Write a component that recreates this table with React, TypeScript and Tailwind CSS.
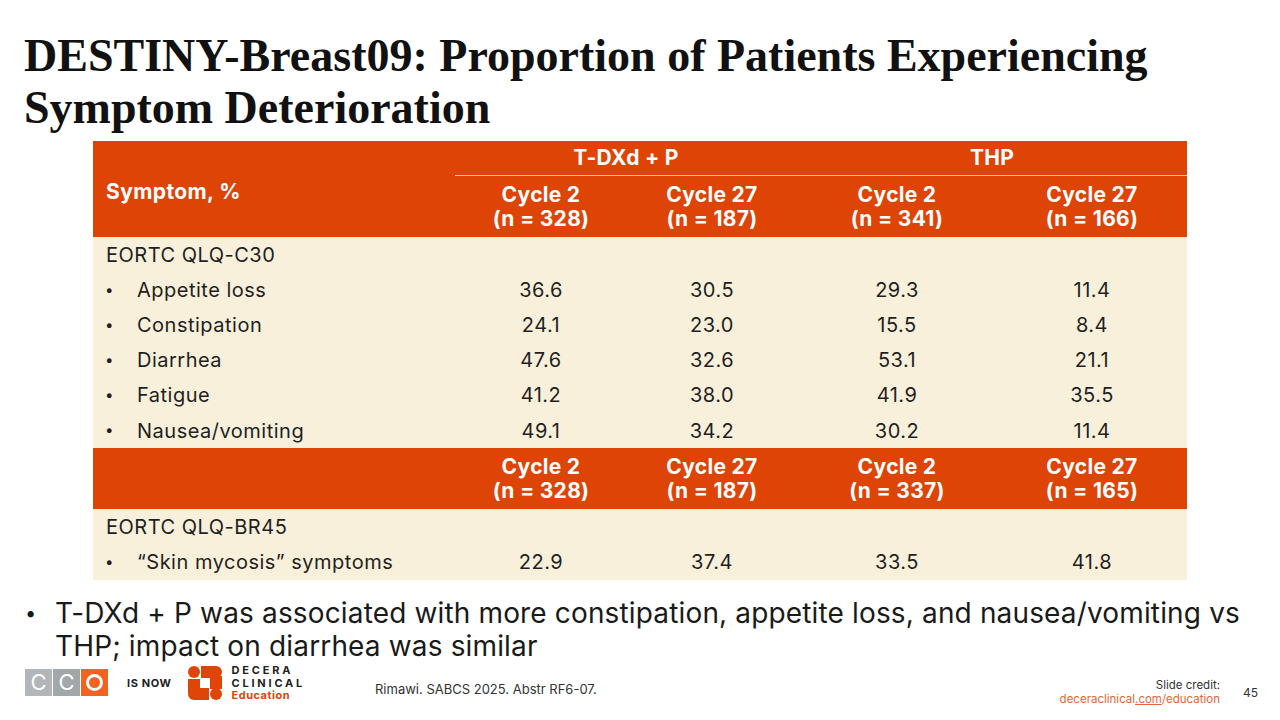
import React from 'react'

const sans = "font-['Inter','Liberation_Sans',sans-serif]"

type Row = { label: string; vals: string[]; bullet?: boolean }

const c30: Row[] = [
  { label: 'EORTC QLQ-C30', vals: [] },
  { label: 'Appetite loss', vals: ['36.6', '30.5', '29.3', '11.4'], bullet: true },
  { label: 'Constipation', vals: ['24.1', '23.0', '15.5', '8.4'], bullet: true },
  { label: 'Diarrhea', vals: ['47.6', '32.6', '53.1', '21.1'], bullet: true },
  { label: 'Fatigue', vals: ['41.2', '38.0', '41.9', '35.5'], bullet: true },
  { label: 'Nausea/vomiting', vals: ['49.1', '34.2', '30.2', '11.4'], bullet: true },
]

const br45: Row[] = [
  { label: 'EORTC QLQ-BR45', vals: [] },
  { label: '\u201cSkin mycosis\u201d symptoms', vals: ['22.9', '37.4', '33.5', '41.8'], bullet: true },
]

const cols = 'grid grid-cols-[362px_172px_170px_200px_190px]'

function CycleHead({ cycle, n }: { cycle: string; n: string }) {
  return (
    <div className="flex flex-col items-center justify-center text-[21px] font-bold leading-[24px] tracking-[0.3px] text-white">
      <span>{cycle}</span>
      <span>(n = {n})</span>
    </div>
  )
}

function DataRow({ row }: { row: Row }) {
  return (
    <div className={`${cols} h-[35.2px] items-center text-[20px] tracking-[0.5px] text-[#1f1f1f]`}>
      {row.bullet ? (
        <div className="flex items-center pl-[12px]">
          <span className="w-[32px] text-[15px]">•</span>
          <span>{row.label}</span>
        </div>
      ) : (
        <div className="pl-[13px]">{row.label}</div>
      )}
      {[0, 1, 2, 3].map((i) => (
        <div key={i} className="text-center">
          {row.vals[i] ?? ''}
        </div>
      ))}
    </div>
  )
}

function DeceraMark() {
  return (
    <svg width="34" height="34" viewBox="0 0 34 34">
      <g fill="#E04508">
        <circle cx="6" cy="6" r="6" />
        <rect x="13" y="0" width="21" height="12" rx="6" />
        <rect x="13" y="0" width="10" height="12" />
        <rect x="22" y="10" width="12" height="13" />
        <rect x="0" y="22" width="21" height="12" rx="6" />
        <rect x="11" y="22" width="10" height="12" />
        <rect x="0" y="13" width="12" height="14" />
        <circle cx="28" cy="28" r="6" />
      </g>
    </svg>
  )
}

function CcoLogo() {
  const box = 'flex h-[27px] w-[27px] items-center justify-center text-[22px] text-white'
  return (
    <div className={`flex gap-[1px] ${sans}`}>
      <div className={`${box} bg-[#b3b6b8]`}>C</div>
      <div className={`${box} bg-[#a2a7aa]`}>C</div>
      <div className={`${box} bg-[#f26322]`}>
        <span className="block h-[17px] w-[17px] rounded-full border-[3px] border-white" />
      </div>
    </div>
  )
}

export default function App() {
  return (
    <div className={`relative h-[720px] w-[1280px] overflow-hidden bg-white ${sans}`}>
      <h1 className="pl-[24px] pt-[30px] font-['Liberation_Serif',serif] text-[46px] font-bold leading-[52px] text-[#111]">
        DESTINY-Breast09: Proportion of Patients Experiencing
        <br />
        Symptom Deterioration
      </h1>

      <div className="ml-[93px] mt-[7px] w-[1094px] bg-[#f8f0da]">
        <div className={`${cols} h-[96px] bg-[#df4407]`}>
          <div className="pl-[13px] pt-[35px] text-[21px] font-bold tracking-[0.4px] text-white">Symptom, %</div>
          <div className="col-span-4 flex flex-col">
            <div className="grid h-[35px] grid-cols-[342px_390px] border-b border-[#f3c9b5] text-[21px] font-bold tracking-[0.3px] text-white">
              <div className="flex items-center justify-center">T-DXd + P</div>
              <div className="flex items-center justify-center">THP</div>
            </div>
            <div className="grid flex-1 grid-cols-[172px_170px_200px_190px]">
              <CycleHead cycle="Cycle 2" n="328" />
              <CycleHead cycle="Cycle 27" n="187" />
              <CycleHead cycle="Cycle 2" n="341" />
              <CycleHead cycle="Cycle 27" n="166" />
            </div>
          </div>
        </div>
        {c30.map((r) => (
          <DataRow key={r.label} row={r} />
        ))}
        <div className={`${cols} h-[61px] bg-[#df4407]`}>
          <div />
          <CycleHead cycle="Cycle 2" n="328" />
          <CycleHead cycle="Cycle 27" n="187" />
          <CycleHead cycle="Cycle 2" n="337" />
          <CycleHead cycle="Cycle 27" n="165" />
        </div>
        {br45.map((r) => (
          <DataRow key={r.label} row={r} />
        ))}
      </div>

      <div className="mt-[17px] flex pl-[25px] text-[28px] leading-[33px] tracking-[0.15px] text-[#1a1a1a]">
        <span className="w-[30px] text-[20px]">•</span>
        <p>
          T-DXd + P was associated with more constipation, appetite loss, and nausea/vomiting vs
          <br />
          THP; impact on diarrhea was similar
        </p>
      </div>

      <div className="absolute left-[25px] top-[664px] flex items-center">
        <CcoLogo />
        <span className="ml-[19px] text-[11px] font-bold tracking-[0.6px] text-[#222]">IS NOW</span>
        <div className="ml-[16px]">
          <DeceraMark />
        </div>
        <div className="ml-[10px] flex flex-col text-[11px] font-bold leading-[12.5px] tracking-[2.8px]">
          <span className="text-[#222]">DECERA</span>
          <span className="text-[#222]">CLINICAL</span>
          <span className="tracking-[0.5px] text-[#e04508]">Education</span>
        </div>
      </div>

      <div className="absolute left-[375px] top-[680px] text-[13px] text-[#333]">
        Rimawi. SABCS 2025. Abstr RF6-07.
      </div>

      <div className="absolute right-[60px] top-[678px] flex flex-col items-end text-[11.5px] leading-[14px]">
        <span className="text-[#333]">Slide credit:</span>
        <span className="text-[#e8643a]">
          deceraclinical<span className="underline">.com</span>/education
        </span>
      </div>
      <div className="absolute left-[1243px] top-[684px] text-[12px] text-[#333]">45</div>
    </div>
  )
}
